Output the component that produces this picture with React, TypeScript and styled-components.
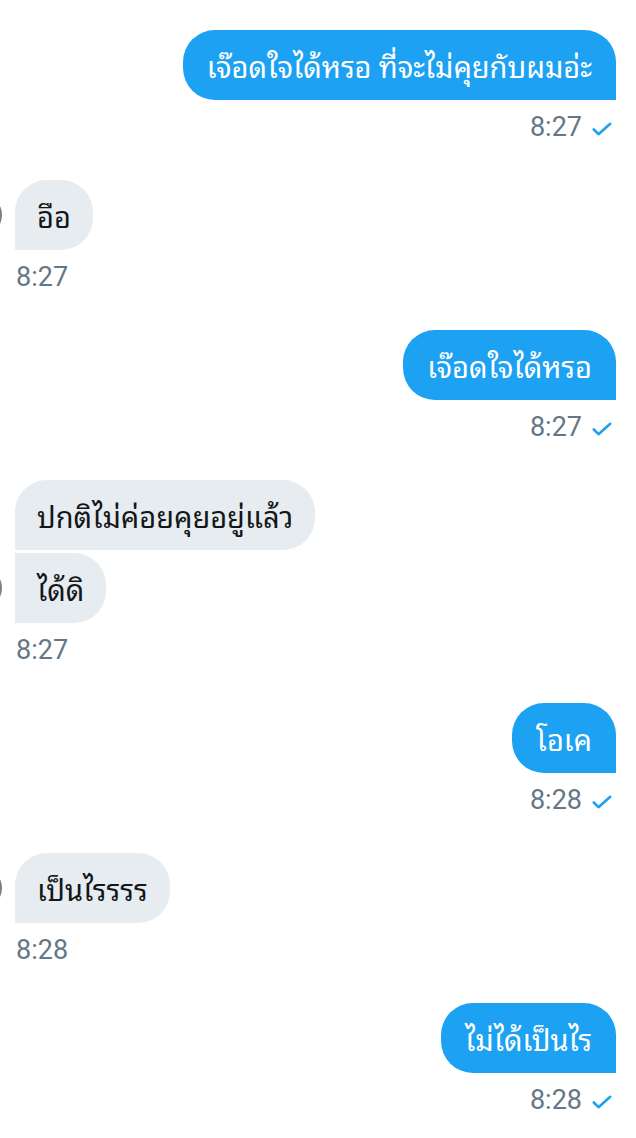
import React from "react";
import styled, { createGlobalStyle } from "styled-components";

const GlobalStyle = createGlobalStyle`
  html, body {
    margin: 0;
    padding: 0;
    background: #ffffff;
  }
  body {
    font-family: Roboto, "Noto Sans Thai Looped", Loma, Garuda, Waree, Umpush, Sarabun, "Noto Sans Thai", "Noto Sans", sans-serif;
    -webkit-font-smoothing: antialiased;
  }
`;

const Thread = styled.div`
  position: relative;
  width: 636px;
  min-height: 1138px;
  box-sizing: border-box;
  padding: 30px 20px 0 15px;
  display: flex;
  flex-direction: column;
  gap: 37px;
  overflow: hidden;
`;

const Block = styled.div<{ $mine: boolean }>`
  display: flex;
  flex-direction: column;
  align-items: ${(p) => (p.$mine ? "flex-end" : "flex-start")};
`;

const Bubbles = styled.div<{ $mine: boolean }>`
  display: flex;
  flex-direction: column;
  gap: 3px;
  align-items: ${(p) => (p.$mine ? "flex-end" : "flex-start")};
`;

const Bubble = styled.div<{ $mine: boolean; $first: boolean }>`
  position: relative;
  box-sizing: border-box;
  height: 70px;
  padding: 0 ${(p) => (p.$mine ? "24px" : "22px")};
  display: flex;
  align-items: center;
  font-size: 29px;
  white-space: nowrap;
  color: ${(p) => (p.$mine ? "#ffffff" : "#14171a")};
  background: ${(p) => (p.$mine ? "#1da1f2" : "#e6ecf0")};
  border-radius: ${(p) =>
    p.$mine
      ? "32px 32px 0 32px"
      : `${p.$first ? "32px" : "0"} 32px 32px 0`};
`;

const Avatar = styled.div`
  position: absolute;
  left: -53px;
  top: 50%;
  width: 40px;
  height: 40px;
  margin-top: -20px;
  border-radius: 50%;
  background: #7a7f85;
`;

const Meta = styled.div`
  margin-top: 10px;
  height: 33px;
  display: flex;
  align-items: center;
  gap: 10px;
  font-family: Roboto, sans-serif;
  font-size: 27px;
  color: #657786;
  padding-left: 1px;
  padding-right: 4px;
`;

const CheckIcon = styled.svg`
  margin-top: 5px;
  flex: none;
`;

const Check = () => (
  <CheckIcon width="20" height="14" viewBox="0 0 20 14" fill="none">
    <path
      d="M1.8 7.5 L6.5 12.2 L18.2 1.8"
      stroke="#1da1f2"
      strokeWidth="2.6"
      strokeLinecap="round"
      strokeLinejoin="round"
    />
  </CheckIcon>
);

type Msg = { mine: boolean; texts: string[]; time: string };

const messages: Msg[] = [
  { mine: true, texts: ["เจ๊อดใจได้หรอ ที่จะไม่คุยกับผมอ่ะ"], time: "8:27" },
  { mine: false, texts: ["อือ"], time: "8:27" },
  { mine: true, texts: ["เจ๊อดใจได้หรอ"], time: "8:27" },
  { mine: false, texts: ["ปกติไม่ค่อยคุยอยู่แล้ว", "ได้ดิ"], time: "8:27" },
  { mine: true, texts: ["โอเค"], time: "8:28" },
  { mine: false, texts: ["เป็นไรรรร"], time: "8:28" },
  { mine: true, texts: ["ไม่ได้เป็นไร"], time: "8:28" },
];

export default function App() {
  return (
    <>
      <GlobalStyle />
      <Thread>
        {messages.map((m, i) => (
          <Block key={i} $mine={m.mine}>
            <Bubbles $mine={m.mine}>
              {m.texts.map((t, j) => (
                <Bubble key={j} $mine={m.mine} $first={j === 0}>
                  {!m.mine && j === m.texts.length - 1 && <Avatar />}
                  {t}
                </Bubble>
              ))}
            </Bubbles>
            <Meta>
              {m.time}
              {m.mine && <Check />}
            </Meta>
          </Block>
        ))}
      </Thread>
    </>
  );
}
